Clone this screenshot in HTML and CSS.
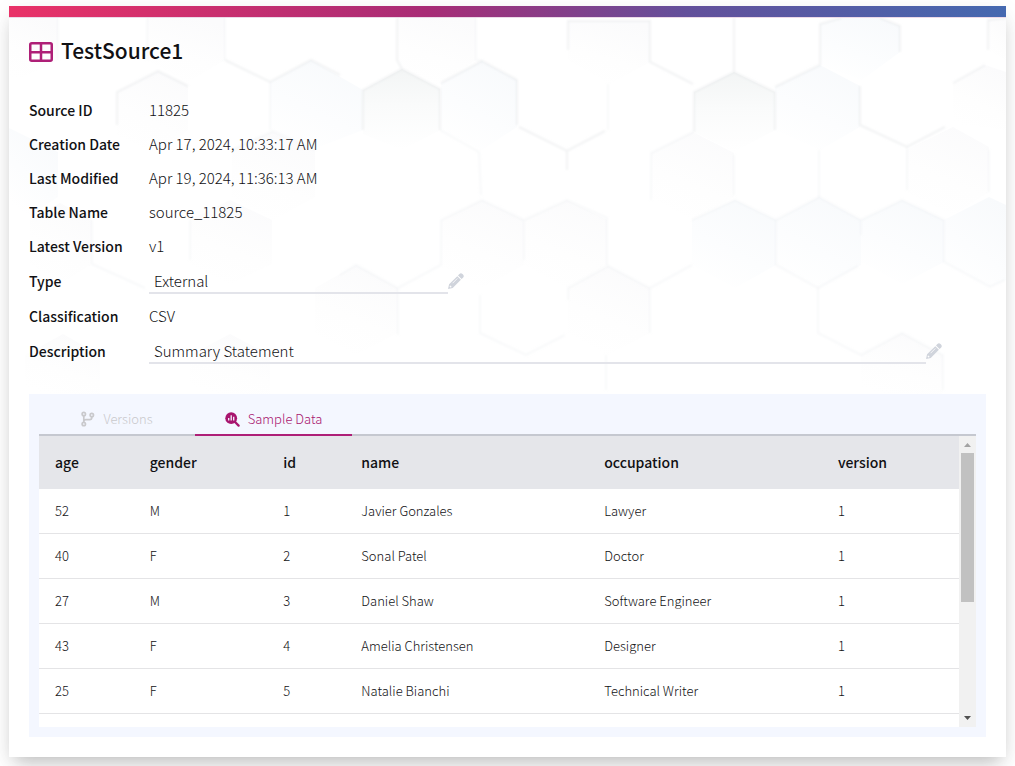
FILE: index.html
```html
<!DOCTYPE html>
<html lang="en">
<head>
<meta charset="utf-8">
<title>TestSource1</title>
<link rel="stylesheet" href="styles.css">
</head>
<body>
<main class="card">
  <div class="accent"></div>
  <svg class="hexes" viewBox="0 0 997 739" preserveAspectRatio="xMidYMin slice" aria-hidden="true">
    <defs>
      <linearGradient id="gray" x1="0" y1="0" x2="0" y2="1"><stop offset="0" stop-color="#f3f5f5"/><stop offset=".45" stop-color="#fafbfb"/><stop offset="1" stop-color="#fff"/></linearGradient>
      <linearGradient id="blue" x1="0.8" y1="0" x2="0.3" y2="1"><stop offset="0" stop-color="#f8fafc"/><stop offset=".6" stop-color="#fcfdfe"/><stop offset="1" stop-color="#fff"/></linearGradient>
      <linearGradient id="pale" x1="0.7" y1="0" x2="0.3" y2="1"><stop offset="0" stop-color="#fbfbfc"/><stop offset=".6" stop-color="#fefefe"/><stop offset="1" stop-color="#fff"/></linearGradient>
      <filter id="soft"><feGaussianBlur stdDeviation="1"/></filter>
    </defs>
    <g transform="translate(-9 -18)">
      <g fill="url(#pale)">
        <path d="M9 18H58V60L9 84Z"/>
        <path d="M147 18H225V60L188 82L147 60Z"/>
        <path d="M117 92L158 71L188 86V130L158 155L117 135Z"/>
        <path d="M397 18H476V60L440 83L402 69L397 60Z"/>
        <path d="M568 21H650V62L610 84L568 60Z"/>
        <path d="M232 150L273 131L315 150V197L273 220L232 197Z"/>
        <path d="M30 220L60 203L92 220V264L60 284L30 264Z"/>
        <path d="M190 220L230 200L272 220V264L230 284L190 264Z"/>
        <path d="M651 153L693 132L734 153V197L693 220L651 197Z"/>
        <path d="M441 220L482 200L524 220V265L482 288L441 265Z"/>
        <path d="M524 220L567 200L607 220V265L567 288L524 265Z"/>
        <path d="M568 288L608 266L650 288V333L608 355L568 333Z"/>
        <path d="M315 288L356 265L398 288V333L356 355L315 333Z"/>
        <path d="M861 355L902 333L943 355V395H861Z"/>
        <path d="M906 150L953 127L989 147V192L953 215L906 192Z"/>
        <path d="M953 83L985 65L1006 72V130L985 127L953 125Z"/>
        <path d="M988 20L1006 18V60L988 50Z"/>
        <path d="M25 355L63 334L100 355V394H25Z"/>
        <path d="M190 355L230 334L270 355V394H190Z"/>
      </g>
      <g fill="url(#blue)">
        <path d="M270 82L311 60L363 90V130L311 150L270 130Z"/>
        <path d="M441 83L482 61L517 80V127L482 150L441 130Z"/>
        <path d="M775 87L820 65L860 86V127L820 150L775 130Z"/>
        <path d="M820 24L841 18H880L900 26V52L862 80L820 65Z"/>
        <path d="M692 220L735 200L776 220V265L735 288L692 265Z"/>
        <path d="M776 220L819 197L861 220V265L818 288L776 265Z"/>
        <path d="M861 220L902 200L944 220V262L902 284L861 262Z"/>
        <path d="M944 220L989 197L1006 205V280L990 287L944 262Z"/>
        <path d="M9 128L58 152V197L30 215L9 205Z"/>
      </g>
      <g fill="url(#gray)">
        <path d="M363 90L402 69L440 89V130L402 150L363 134Z"/>
        <path d="M694 92L734 72L775 92V130L734 152L694 132Z"/>
      </g>
      <g fill="none" stroke="#dfe2e4" stroke-width="2" stroke-opacity=".4" filter="url(#soft)">
        <path d="M363 130V90L402 69L440 89V130M397 18V60L402 69M517 80V125"/>
        <path d="M568 50V21H650V62L693 84M694 132V92L734 72L775 92V130M734 18V72M441 83L482 61L517 80"/>
        <path d="M775 87L820 65V24L841 18M880 18L900 26V52M860 86V125L907 147L945 127M953 83L985 65M988 50V20L1006 18"/>
        <path d="M117 125V92L158 71L188 86M225 60L270 82L311 60L340 75M519 127L567 151L605 131M567 151V170"/>
      </g>
      <g fill="none" stroke="#e5e9ed" stroke-width="2" stroke-opacity=".25" filter="url(#soft)">
        <path d="M58 18V60M147 18V60M225 18V60M476 18V60L482 61M270 82V130M232 150L273 131L315 150M481 195L479 152L440 130M608 84V130M651 200V153L693 132"/>
        <path d="M819 197V150M907 147V190M989 150V192M734 155V195"/>
        <path d="M190 260V220M398 335V288L356 265L340 275M398 288L441 265V220L482 200L524 220V260M524 220L567 200L607 218V265"/>
        <path d="M568 300V288L608 266L650 288V333M650 288L692 265M480 295V333L526 355L565 335M692 220L735 200L776 220V265L818 288V333L861 355L902 333L943 355V390"/>
        <path d="M776 220L819 197L861 220L902 200L944 220V262L990 287L1005 280M818 288L858 266M861 220V235M92 220V264L145 288M606 355V390"/>
      </g>
    </g>
  </svg>
  <div class="content">
    <header class="title">
      <svg width="24" height="20" viewBox="0 0 24 20" fill="none" stroke="#ae1f77" aria-hidden="true"><rect x="1.25" y="1.25" width="21.5" height="17.5" rx="1.5" stroke-width="2.5"/><path d="M12 1V19M1 10.2H23" stroke-width="2.5"/></svg>
      <h1>TestSource1</h1>
    </header>
    <section class="fields">
      <div class="field"><span class="label">Source ID</span><span>11825</span></div>
      <div class="field"><span class="label">Creation Date</span><span>Apr 17, 2024, 10:33:17 AM</span></div>
      <div class="field"><span class="label">Last Modified</span><span>Apr 19, 2024, 11:36:13 AM</span></div>
      <div class="field"><span class="label">Table Name</span><span>source_11825</span></div>
      <div class="field"><span class="label">Latest Version</span><span>v1</span></div>
      <div class="field editable"><label class="label" for="type">Type</label><input class="short" id="type" type="text" value="External"><button class="edit" type="button" aria-label="Edit type"><svg width="16" height="16" viewBox="0 0 16 16" aria-hidden="true"><path fill="#d0d4dc" d="M11.4 1.1a2.2 2.2 0 0 1 3.1 0l.5.5a2.2 2.2 0 0 1 0 3.1l-1.4 1.4-3.6-3.6zM9.3 3.2l3.6 3.6-8.2 8.1L0 16l1.1-4.7z"/><path stroke="#fff" stroke-width=".8" d="M4.6 10.2l4.8-4.8"/><path fill="#fff" d="M2 12.2l1.8 1.8-1.6.4-.6-.6z"/></svg></button></div>
      <div class="field"><span class="label">Classification</span><span>CSV</span></div>
      <div class="field editable"><label class="label" for="description">Description</label><input class="long" id="description" type="text" value="Summary Statement"><button class="edit" type="button" aria-label="Edit description"><svg width="16" height="16" viewBox="0 0 16 16" aria-hidden="true"><path fill="#d0d4dc" d="M11.4 1.1a2.2 2.2 0 0 1 3.1 0l.5.5a2.2 2.2 0 0 1 0 3.1l-1.4 1.4-3.6-3.6zM9.3 3.2l3.6 3.6-8.2 8.1L0 16l1.1-4.7z"/><path stroke="#fff" stroke-width=".8" d="M4.6 10.2l4.8-4.8"/><path fill="#fff" d="M2 12.2l1.8 1.8-1.6.4-.6-.6z"/></svg></button></div>
    </section>
    <section class="panel">
      <div class="tabs" role="tablist">
        <button class="tab" type="button" role="tab" aria-selected="false"><svg width="14" height="16" viewBox="0 0 14 16" fill="none" stroke="currentColor" stroke-width="1.7" aria-hidden="true"><circle cx="2.8" cy="3" r="1.7"/><circle cx="2.8" cy="13" r="1.7"/><circle cx="10.8" cy="4" r="1.7"/><path d="M2.8 4.7V11.3M10.8 5.7V6.5Q10.8 8.6 8.7 8.6H5Q2.8 8.6 2.8 10.5"/></svg>Versions</button>
        <button class="tab active" type="button" role="tab" aria-selected="true"><svg width="15" height="15" viewBox="0 0 15 15" aria-hidden="true"><circle cx="6.2" cy="6.2" r="5.9" fill="currentColor"/><path d="M9.8 9.8L13.6 13.6" stroke="currentColor" stroke-width="2.3" stroke-linecap="round"/><path d="M3.7 6V8.6M6.2 3.2V8.6M8.7 4.8V8.6" stroke="#f4f7ff" stroke-width="1.3"/></svg>Sample Data</button>
      </div>
      <div class="viewport">
        <div class="rows">
          <table>
            <colgroup><col class="age"><col class="gender"><col class="id"><col class="name"><col class="occupation"><col></colgroup>
            <thead><tr><th>age</th><th>gender</th><th>id</th><th>name</th><th>occupation</th><th>version</th></tr></thead>
            <tbody>
              <tr><td>52</td><td>M</td><td>1</td><td>Javier Gonzales</td><td>Lawyer</td><td>1</td></tr>
              <tr><td>40</td><td>F</td><td>2</td><td>Sonal Patel</td><td>Doctor</td><td>1</td></tr>
              <tr><td>27</td><td>M</td><td>3</td><td>Daniel Shaw</td><td>Software Engineer</td><td>1</td></tr>
              <tr><td>43</td><td>F</td><td>4</td><td>Amelia Christensen</td><td>Designer</td><td>1</td></tr>
              <tr><td>25</td><td>F</td><td>5</td><td>Natalie Bianchi</td><td>Technical Writer</td><td>1</td></tr>
            </tbody>
          </table>
        </div>
        <div class="scrollbar" aria-hidden="true">
          <svg width="17" height="17" viewBox="0 0 17 17"><path fill="#a3a3a3" d="M5 11H12L8.5 7Z"/></svg>
          <div class="track"><div class="thumb"></div></div>
          <svg width="17" height="17" viewBox="0 0 17 17"><path fill="#505050" d="M5 6H12L8.5 10Z"/></svg>
        </div>
      </div>
    </section>
  </div>
</main>
</body>
</html>
```
FILE: styles.css
```css
* { box-sizing: border-box; }
body {
  margin: 0;
  padding: 6px 9px 9px;
  background: #fff;
  color: #111114;
  font-family: "Noto Sans CJK SC", "Noto Sans", sans-serif;
  font-size: 15px;
  font-weight: 300;
  line-height: 20px;
}
.card {
  position: relative;
  background: #fff;
  box-shadow: 0 10px 18px -6px rgba(0, 0, 0, .24), 0 6px 24px rgba(0, 0, 0, .06);
}
.accent {
  height: 12px;
  border-bottom: 1px solid #ecd9e8;
  background: linear-gradient(90deg, #e93268, #a82c76 42%, #63509b 68%, #4569b0) padding-box;
}
.hexes {
  position: absolute;
  top: 12px;
  left: 0;
  width: 100%;
  height: calc(100% - 12px);
}
.content {
  position: relative;
  padding: 0 20px 20px;
}
.title {
  display: flex;
  align-items: center;
  gap: 8px;
  height: 68px;
  margin-bottom: 8px;
}
h1 {
  margin: 0;
  padding-bottom: 4px;
  font-size: 21px;
  font-weight: 500;
  line-height: 32px;
}
.field {
  display: flex;
  align-items: center;
  min-height: 34px;
  padding-bottom: 2px;
}
.editable { min-height: 36px; }
.label {
  flex: none;
  width: 120px;
  font-size: 14px;
  font-weight: 500;
}
input {
  height: 26px;
  padding: 0 5px;
  border: 0;
  border-bottom: 2px solid #e3e4ea;
  background: transparent;
  color: inherit;
  font: inherit;
  outline: 0;
}
.short { width: 299px; }
.long { flex: 0 1 777px; }
button {
  padding: 0;
  border: 0;
  background: none;
  font: inherit;
  cursor: pointer;
}
.edit, .edit svg, .tab svg, .scrollbar svg { display: block; }
.panel {
  margin-top: 24px;
  padding: 0 10px 10px;
  background: #f4f7ff;
}
.tabs {
  display: flex;
  height: 42px;
  box-shadow: inset 0 -2px #c5c8d0;
}
.tab {
  display: flex;
  align-items: center;
  justify-content: center;
  gap: 8px;
  width: 156px;
  padding-top: 10px;
  border-bottom: 2px solid transparent;
  color: #c9c9cc;
  font-size: 13px;
}
.active {
  width: 157px;
  border-color: #ae1f77;
  color: #a8156e;
}
.viewport {
  display: flex;
  height: 291px;
  background: #fff;
}
.rows {
  flex: 1;
  overflow: hidden;
}
table {
  width: 100%;
  border-spacing: 0;
  table-layout: fixed;
}
.age { width: 10.3%; }
.gender { width: 14.5%; }
.id { width: 8.5%; }
.name { width: 26.4%; }
.occupation { width: 25.4%; }
th, td {
  padding: 0 16px;
  text-align: left;
}
th {
  height: 53px;
  padding-bottom: 2px;
  background: #e5e6ea;
  font-size: 14px;
  font-weight: 500;
}
td {
  height: 45px;
  border-bottom: 1px solid #e4e4e6;
  font-size: 13px;
}
.scrollbar {
  display: flex;
  flex-direction: column;
  width: 17px;
  background: #f1f1f1;
}
.track {
  flex: 1;
  padding: 0 2px;
}
.thumb {
  height: 58%;
  background: #c1c1c1;
}
```
